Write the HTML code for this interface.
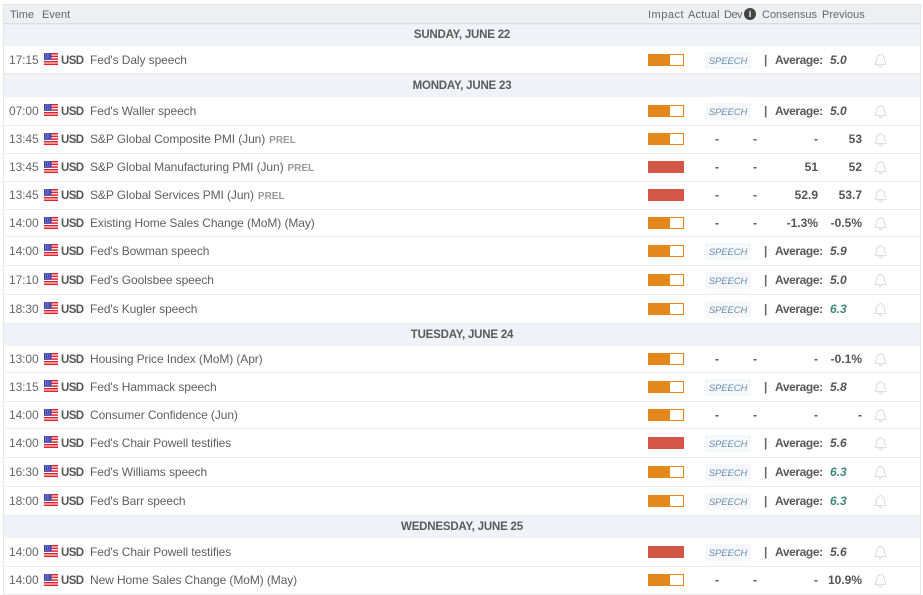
<!DOCTYPE html>
<html><head><meta charset="utf-8"><style>
html,body{margin:0;padding:0;background:#fff;width:923px;height:595px;overflow:hidden}
body{font-family:"Liberation Sans",Arial,sans-serif;font-size:12px;color:#5f5f5f;position:relative}
#t{position:absolute;left:3px;top:4px;width:918px;height:591px;border-left:1px solid #e6e6e6;border-right:1px solid #e6e6e6;box-sizing:border-box;z-index:5}
.r,.d,.h{position:absolute;left:4px;width:916px;box-sizing:border-box}
.h{top:4px;height:20px;background:#eeeff3;border-top:1px solid #e6e6e8;border-bottom:1px solid #dcdde2;line-height:20px;font-size:11px;color:#666}
.d{background:#f1f2f7;text-align:center;font-weight:bold;color:#5a5a5a;font-size:11.5px;letter-spacing:-.2px;border-top:1px solid #eeeef2}
.r{border-bottom:1px solid #ebebeb;background:#fff}
.r span,.h span,.r svg,.r i{position:absolute}
.tm{left:5px;color:#666;letter-spacing:-.1px}
.cur{left:57px;font-weight:bold;color:#555;font-size:11.5px;letter-spacing:-.6px;margin-top:1px}
.ev{left:86px;white-space:nowrap;color:#5f5f5f;letter-spacing:-.09px}
.ev em{font-style:normal;font-weight:bold;font-size:10px;letter-spacing:0;color:#9a9a9a;margin-left:4px}
.fl{left:40px;width:14px;height:12px}
.im{left:644px;width:36px;height:12px;box-sizing:border-box;border:1px solid #e5881c;background:linear-gradient(90deg,#e5881c 21px,#fff 21px)}
.im.hi{background:#d35746;border-color:#d35746}
.sp{left:701px;width:46px;height:17px;background:#f5f7fa;text-align:center;font-size:9.5px;font-style:italic;color:#6a8fb0;line-height:19px;letter-spacing:-.1px}
.pp{left:760px;color:#666;font-weight:bold}
.av{left:771px;font-weight:bold;color:#5a5a5a;letter-spacing:-.4px}
.va{left:826px;font-weight:bold;font-style:italic;color:#555}
.va.g{color:#3d8a78}
.a,.de{font-weight:bold;color:#555}
.a{left:711px}.de{left:749px}
.c,.p{font-weight:bold;color:#555;text-align:right;width:70px}
.c{left:744px}.p{left:788px}
.be{left:870px;width:13px;height:14px}
</style></head><body>
<svg width="0" height="0" style="position:absolute"><defs>
<g id="f"><rect width="14" height="12" fill="#fff"/><rect width="14" height="1.500" fill="#e0202a"/><rect y="2.600" width="14" height="1.500" fill="#e0202a"/><rect y="5.300" width="14" height="1.500" fill="#e0202a"/><rect y="8" width="14" height="1.500" fill="#e0202a"/><rect y="10.500" width="14" height="1.500" fill="#e0202a"/><rect width="7.500" height="6.700" fill="#3a3fae"/><path d="M1 1h5.500M1 3h5.500M1 5h5.500" stroke="#c9cbe8" stroke-width=".8" stroke-dasharray="1 .8"/></g>
<path id="b" transform="translate(0,-1)" d="M6.500 1.200c.6 0 1 .3 1 .9 2 .5 2.800 2 2.900 4 .1 2.200.6 3.600 1.600 4.800v.7H1v-.7c1-1.200 1.500-2.600 1.600-4.800.1-2 .9-3.500 2.900-4 0-.6.4-.9 1-.9zM5 12.500c.2.800.8 1.200 1.500 1.200s1.300-.4 1.500-1.200" fill="none" stroke="#dcdcdc" stroke-width="1"/>
</defs></svg>
<div id="t"></div>
<div class="h"><span style="left:6px">Time</span><span style="left:38px">Event</span><span style="left:644px;letter-spacing:.5px">Impact</span><span style="left:684px;letter-spacing:.2px">Actual</span><span style="left:720px;letter-spacing:-.5px">Dev</span><span style="left:740px;top:3px;width:12px;height:12px;border-radius:6px;background:#444;color:#fff;font-size:9px;line-height:12px;text-align:center;font-weight:bold">i</span><span style="left:758px">Consensus</span><span style="left:818px">Previous</span></div>

<div class="d" style="top:24px;height:22px;line-height:20px">SUNDAY, JUNE 22</div>
<div class="r" style="top:46px;height:28px;line-height:29px"><span class="tm">17:15</span><svg class="fl" style="top:7px"><use href="#f"/></svg><span class="cur">USD</span><span class="ev">Fed's Daly speech</span><i class="im" style="top:8px"></i><span class="sp" style="top:6px">SPEECH</span><span class="pp">|</span><span class="av">Average:</span><span class="va">5.0</span><svg class="be" style="top:8px"><use href="#b"/></svg></div>

<div class="d" style="top:74px;height:23px;line-height:23px">MONDAY, JUNE 23</div>
<div class="r" style="top:97px;height:29px;line-height:29px"><span class="tm">07:00</span><svg class="fl" style="top:7px"><use href="#f"/></svg><span class="cur">USD</span><span class="ev">Fed's Waller speech</span><i class="im" style="top:8px"></i><span class="sp" style="top:6px">SPEECH</span><span class="pp">|</span><span class="av">Average:</span><span class="va">5.0</span><svg class="be" style="top:8px"><use href="#b"/></svg></div>
<div class="r" style="top:126px;height:28px;line-height:26px"><span class="tm">13:45</span><svg class="fl" style="top:7px"><use href="#f"/></svg><span class="cur">USD</span><span class="ev">S&amp;P Global Composite PMI (Jun)<em>PREL</em></span><i class="im" style="top:7px"></i><span class="a">-</span><span class="de">-</span><span class="c">-</span><span class="p">53</span><svg class="be" style="top:7px"><use href="#b"/></svg></div>
<div class="r" style="top:154px;height:28px;line-height:26px"><span class="tm">13:45</span><svg class="fl" style="top:7px"><use href="#f"/></svg><span class="cur">USD</span><span class="ev">S&amp;P Global Manufacturing PMI (Jun)<em>PREL</em></span><i class="im hi" style="top:7px"></i><span class="a">-</span><span class="de">-</span><span class="c">51</span><span class="p">52</span><svg class="be" style="top:7px"><use href="#b"/></svg></div>
<div class="r" style="top:182px;height:28px;line-height:26px"><span class="tm">13:45</span><svg class="fl" style="top:7px"><use href="#f"/></svg><span class="cur">USD</span><span class="ev">S&amp;P Global Services PMI (Jun)<em>PREL</em></span><i class="im hi" style="top:7px"></i><span class="a">-</span><span class="de">-</span><span class="c">52.9</span><span class="p">53.7</span><svg class="be" style="top:7px"><use href="#b"/></svg></div>
<div class="r" style="top:210px;height:27px;line-height:27px"><span class="tm">14:00</span><svg class="fl" style="top:7px"><use href="#f"/></svg><span class="cur">USD</span><span class="ev">Existing Home Sales Change (MoM) (May)</span><i class="im" style="top:7px"></i><span class="a">-</span><span class="de">-</span><span class="c">-1.3%</span><span class="p">-0.5%</span><svg class="be" style="top:7px"><use href="#b"/></svg></div>
<div class="r" style="top:237px;height:29px;line-height:29px"><span class="tm">14:00</span><svg class="fl" style="top:7px"><use href="#f"/></svg><span class="cur">USD</span><span class="ev">Fed's Bowman speech</span><i class="im" style="top:8px"></i><span class="sp" style="top:6px">SPEECH</span><span class="pp">|</span><span class="av">Average:</span><span class="va">5.9</span><svg class="be" style="top:8px"><use href="#b"/></svg></div>
<div class="r" style="top:266px;height:29px;line-height:29px"><span class="tm">17:10</span><svg class="fl" style="top:7px"><use href="#f"/></svg><span class="cur">USD</span><span class="ev">Fed's Goolsbee speech</span><i class="im" style="top:8px"></i><span class="sp" style="top:6px">SPEECH</span><span class="pp">|</span><span class="av">Average:</span><span class="va">5.0</span><svg class="be" style="top:8px"><use href="#b"/></svg></div>
<div class="r" style="top:295px;height:29px;line-height:29px"><span class="tm">18:30</span><svg class="fl" style="top:7px"><use href="#f"/></svg><span class="cur">USD</span><span class="ev">Fed's Kugler speech</span><i class="im" style="top:8px"></i><span class="sp" style="top:6px">SPEECH</span><span class="pp">|</span><span class="av">Average:</span><span class="va g">6.3</span><svg class="be" style="top:8px"><use href="#b"/></svg></div>

<div class="d" style="top:323px;height:23px;line-height:23px">TUESDAY, JUNE 24</div>
<div class="r" style="top:346px;height:27px;line-height:27px"><span class="tm">13:00</span><svg class="fl" style="top:7px"><use href="#f"/></svg><span class="cur">USD</span><span class="ev">Housing Price Index (MoM) (Apr)</span><i class="im" style="top:7px"></i><span class="a">-</span><span class="de">-</span><span class="c">-</span><span class="p">-0.1%</span><svg class="be" style="top:7px"><use href="#b"/></svg></div>
<div class="r" style="top:373px;height:29px;line-height:29px"><span class="tm">13:15</span><svg class="fl" style="top:7px"><use href="#f"/></svg><span class="cur">USD</span><span class="ev">Fed's Hammack speech</span><i class="im" style="top:8px"></i><span class="sp" style="top:6px">SPEECH</span><span class="pp">|</span><span class="av">Average:</span><span class="va">5.8</span><svg class="be" style="top:8px"><use href="#b"/></svg></div>
<div class="r" style="top:402px;height:27px;line-height:27px"><span class="tm">14:00</span><svg class="fl" style="top:7px"><use href="#f"/></svg><span class="cur">USD</span><span class="ev">Consumer Confidence (Jun)</span><i class="im" style="top:7px"></i><span class="a">-</span><span class="de">-</span><span class="c">-</span><span class="p">-</span><svg class="be" style="top:7px"><use href="#b"/></svg></div>
<div class="r" style="top:429px;height:29px;line-height:29px"><span class="tm">14:00</span><svg class="fl" style="top:7px"><use href="#f"/></svg><span class="cur">USD</span><span class="ev">Fed's Chair Powell testifies</span><i class="im hi" style="top:8px"></i><span class="sp" style="top:6px">SPEECH</span><span class="pp">|</span><span class="av">Average:</span><span class="va">5.6</span><svg class="be" style="top:8px"><use href="#b"/></svg></div>
<div class="r" style="top:458px;height:29px;line-height:29px"><span class="tm">16:30</span><svg class="fl" style="top:7px"><use href="#f"/></svg><span class="cur">USD</span><span class="ev">Fed's Williams speech</span><i class="im" style="top:8px"></i><span class="sp" style="top:6px">SPEECH</span><span class="pp">|</span><span class="av">Average:</span><span class="va g">6.3</span><svg class="be" style="top:8px"><use href="#b"/></svg></div>
<div class="r" style="top:487px;height:29px;line-height:29px"><span class="tm">18:00</span><svg class="fl" style="top:7px"><use href="#f"/></svg><span class="cur">USD</span><span class="ev">Fed's Barr speech</span><i class="im" style="top:8px"></i><span class="sp" style="top:6px">SPEECH</span><span class="pp">|</span><span class="av">Average:</span><span class="va g">6.3</span><svg class="be" style="top:8px"><use href="#b"/></svg></div>

<div class="d" style="top:515px;height:23px;line-height:23px">WEDNESDAY, JUNE 25</div>
<div class="r" style="top:538px;height:29px;line-height:29px"><span class="tm">14:00</span><svg class="fl" style="top:7px"><use href="#f"/></svg><span class="cur">USD</span><span class="ev">Fed's Chair Powell testifies</span><i class="im hi" style="top:8px"></i><span class="sp" style="top:6px">SPEECH</span><span class="pp">|</span><span class="av">Average:</span><span class="va">5.6</span><svg class="be" style="top:8px"><use href="#b"/></svg></div>
<div class="r" style="top:567px;height:28px;line-height:27px"><span class="tm">14:00</span><svg class="fl" style="top:7px"><use href="#f"/></svg><span class="cur">USD</span><span class="ev">New Home Sales Change (MoM) (May)</span><i class="im" style="top:7px"></i><span class="a">-</span><span class="de">-</span><span class="c">-</span><span class="p">10.9%</span><svg class="be" style="top:7px"><use href="#b"/></svg></div>
</body></html>
